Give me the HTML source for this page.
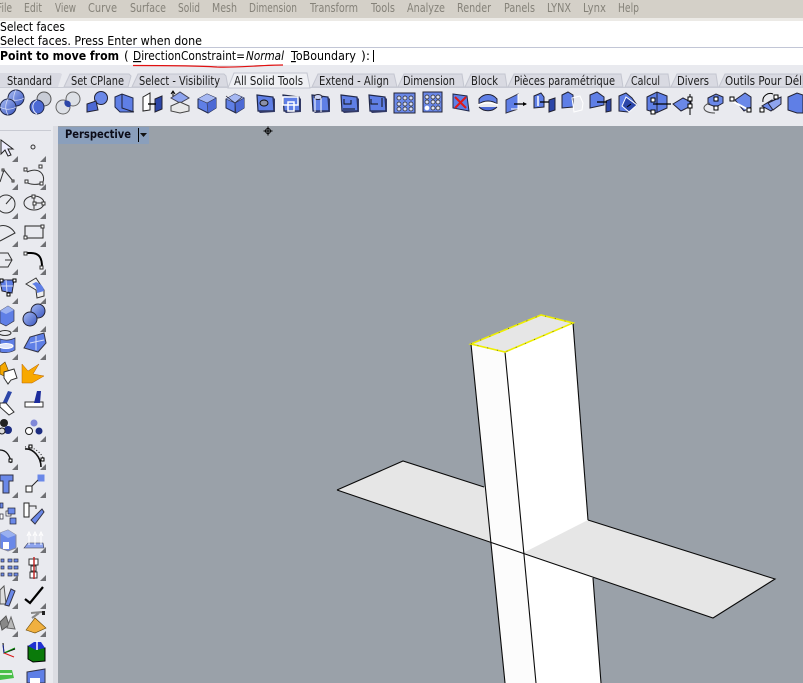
<!DOCTYPE html>
<html><head><meta charset="utf-8"><title>Rhino</title>
<style>
html,body{margin:0;padding:0;background:#e9eaef;overflow:hidden}
svg{display:block}
text{font-family:"DejaVu Sans","Liberation Sans",sans-serif}
.m{font-size:12px;fill:#858279}
.c{font-size:12px;fill:#000}
.t{font-size:12px;fill:#1c1c1c}
</style></head><body>
<svg width="803" height="683" viewBox="0 0 803 683" xmlns="http://www.w3.org/2000/svg">
<defs>
<linearGradient id="bl" x1="0" y1="0" x2="1" y2="1"><stop offset="0" stop-color="#a8bcf4"/><stop offset="1" stop-color="#3a56c0"/></linearGradient>
<symbol id="cube" overflow="visible" viewBox="-12 -12 24 24" width="24" height="24">
<path d="M-9-4 0-9 9-5 9 5 1 10-9 5Z" fill="#5f7fe6" stroke="#20284a" stroke-width="1"/>
<path d="M-9-4 0-9 9-5 0 0Z" fill="#a6b8f2"/><path d="M0 0 9-5 9 5 1 10Z" fill="#4c69d4"/>
<path d="M-9-4 0 0 1 10M0 0 9-5" fill="none" stroke="#334" stroke-width=".6"/>
</symbol>
<symbol id="box" overflow="visible" viewBox="-12 -12 24 24" width="24" height="24">
<path d="M-8-8 8-6 9 8-7 8Z" fill="#5f7fe6" stroke="#20284a" stroke-width="1.2"/>
<path d="M8-6 10-4 10 9 9 8Z" fill="#333a66"/><path d="M-7 8 9 8 10 9-5 10Z" fill="#333a66"/>
</symbol>
<symbol id="sph" overflow="visible" viewBox="-12 -12 24 24" width="24" height="24">
<circle r="8" fill="url(#bl)" stroke="#20284a"/><path d="M-8 0C-3 3 3 3 8 0M0-8C-3-3-3 3 0 8" fill="none" stroke="#dfe5fb" stroke-width=".7"/>
</symbol>
<path id="tri" d="M5 0V6H-1Z" fill="#6f7074"/>
</defs>

<rect width="803" height="683" fill="#e9eaef"/>
<!-- menu -->
<rect width="803" height="18" fill="#d4d0c8"/>
<rect y="18" width="803" height="3" fill="#eceae6"/>
<g class="m">
<text x="-3" y="12" textLength="15" lengthAdjust="spacingAndGlyphs">File</text>
<text x="24" y="12" textLength="18" lengthAdjust="spacingAndGlyphs">Edit</text>
<text x="55" y="12" textLength="21" lengthAdjust="spacingAndGlyphs">View</text>
<text x="88" y="12" textLength="29" lengthAdjust="spacingAndGlyphs">Curve</text>
<text x="130" y="12" textLength="36" lengthAdjust="spacingAndGlyphs">Surface</text>
<text x="178" y="12" textLength="22" lengthAdjust="spacingAndGlyphs">Solid</text>
<text x="212" y="12" textLength="25" lengthAdjust="spacingAndGlyphs">Mesh</text>
<text x="249" y="12" textLength="48" lengthAdjust="spacingAndGlyphs">Dimension</text>
<text x="310" y="12" textLength="48" lengthAdjust="spacingAndGlyphs">Transform</text>
<text x="371" y="12" textLength="24" lengthAdjust="spacingAndGlyphs">Tools</text>
<text x="407" y="12" textLength="38" lengthAdjust="spacingAndGlyphs">Analyze</text>
<text x="457" y="12" textLength="34" lengthAdjust="spacingAndGlyphs">Render</text>
<text x="504" y="12" textLength="31" lengthAdjust="spacingAndGlyphs">Panels</text>
<text x="547" y="12" textLength="24" lengthAdjust="spacingAndGlyphs">LYNX</text>
<text x="583" y="12" textLength="23" lengthAdjust="spacingAndGlyphs">Lynx</text>
<text x="618" y="12" textLength="21" lengthAdjust="spacingAndGlyphs">Help</text>
</g>
<!-- command area -->
<rect y="21" width="803" height="44" fill="#fff"/>
<rect y="47" width="803" height="1" fill="#c2c6d6"/>
<g class="c">
<text x="0" y="31" textLength="65" lengthAdjust="spacingAndGlyphs">Select faces</text>
<text x="0" y="45" textLength="202" lengthAdjust="spacingAndGlyphs">Select faces. Press Enter when done</text>
<text x="0" y="60" textLength="119" lengthAdjust="spacingAndGlyphs" font-weight="bold">Point to move from</text>
<text x="124" y="60">(</text>
<text x="133" y="60" textLength="112" lengthAdjust="spacingAndGlyphs"><tspan text-decoration="underline">D</tspan>irectionConstraint=</text>
<text x="246" y="60" textLength="38" lengthAdjust="spacingAndGlyphs" font-style="italic">Normal</text>
<text x="291" y="60" textLength="65" lengthAdjust="spacingAndGlyphs"><tspan text-decoration="underline">T</tspan>oBoundary</text>
<text x="361" y="60" textLength="9" lengthAdjust="spacingAndGlyphs">):</text>
</g>
<rect x="373" y="50" width="1" height="12" fill="#000"/>
<path d="M133 65.5C160 65.500 195 65.500 217 67C230 67.500 245 66.500 256 66C265 65.500 275 65 283 65" fill="none" stroke="#e01010" stroke-width="1.200"/>

<!-- tab row -->
<path d="M0 73H60L62 74 58 87H0Z" fill="#d9dae2"/>
<g fill="#d9dae2" stroke="#c4c6d0" stroke-width="1">
<path d="M64 87 70 74 129 74 131 76 128 87Z"/>
<path d="M132 87 138 74 224 74 226 76 228 87Z"/>
<path d="M312 87 318 74 394 74 397 87Z"/>
<path d="M398 87 404 74 462 74 464 87Z"/>
<path d="M465 87 471 74 505 74 507 87Z"/>
<path d="M508 87 514 74 621 74 623 87Z"/>
<path d="M625 87 631 74 668 74 670 87Z"/>
<path d="M671 87 677 74 716 74 718 87Z"/>
<path d="M719 87 725 74 803 74 803 87Z"/>
</g>
<path d="M228 88 234 73 307 73 310 88Z" fill="#eff0f4" stroke="#c4c6d0"/>
<rect y="87" width="228" height="1" fill="#c8cad4"/><rect x="310" y="87" width="493" height="1" fill="#c8cad4"/>
<g class="t">
<text x="7" y="85" textLength="45" lengthAdjust="spacingAndGlyphs">Standard</text>
<text x="71" y="85" textLength="53" lengthAdjust="spacingAndGlyphs">Set CPlane</text>
<text x="139" y="85" textLength="81" lengthAdjust="spacingAndGlyphs">Select - Visibility</text>
<text x="234" y="85" textLength="69" lengthAdjust="spacingAndGlyphs">All Solid Tools</text>
<text x="319" y="85" textLength="70" lengthAdjust="spacingAndGlyphs">Extend - Align</text>
<text x="403" y="85" textLength="52" lengthAdjust="spacingAndGlyphs">Dimension</text>
<text x="471" y="85" textLength="27" lengthAdjust="spacingAndGlyphs">Block</text>
<text x="514" y="85" textLength="101" lengthAdjust="spacingAndGlyphs">Pièces paramétrique</text>
<text x="631" y="85" textLength="29" lengthAdjust="spacingAndGlyphs">Calcul</text>
<text x="677" y="85" textLength="32" lengthAdjust="spacingAndGlyphs">Divers</text>
<text x="725" y="85" textLength="84" lengthAdjust="spacingAndGlyphs">Outils Pour Délit</text>
</g>

<!-- toolbar icons -->
<use href="#sph" x="4" y="86"/><use href="#sph" x="-4" y="95"/>
<circle cx="44" cy="99" r="7" fill="#c8ccd6" stroke="#555"/><circle cx="37" cy="107" r="7" fill="#4c69d4" stroke="#20284a"/><path d="M37 100C30 104 33 112 37 114" fill="none" stroke="#e2e6f8"/>
<circle cx="73" cy="99" r="7" fill="#dde0e6" stroke="#666"/><circle cx="63" cy="107" r="7" fill="#dde0e6" stroke="#666"/><path d="M65 100.500C70 100 72 103 70 107 66 108 63 104 65 100.500Z" fill="#2c46a8"/>
<circle cx="101" cy="98" r="6.500" fill="#6a88e8" stroke="#223"/><path d="M87 104 96 101 98 110 87 112Z" fill="#4c69d4" stroke="#223"/>
<path d="M115 97 122 94 133 98 133 112 120 112 115 107Z" fill="#5f7fe6" stroke="#20284a"/><path d="M122 94 122 108 134 112" fill="none" stroke="#223"/>
<path d="M143 97 150 93 150 110 143 111Z" fill="#fff" stroke="#222"/><path d="M155 99 162 96 162 109 155 112Z" fill="#2c46a8" stroke="#223"/><path d="M148 104H156" stroke="#000" stroke-width="1.400"/>
<path d="M173 92V99M171 94 173 91 175 94" stroke="#000" fill="none"/><path d="M171 98 180 92 189 98 180 103Z" fill="#8ea4ee" stroke="#445"/><path d="M171 106 180 102 189 106V111L180 113 171 111Z" fill="#e8e8e8" stroke="#444"/>
<use href="#cube" x="195" y="91"/>
<use href="#cube" x="223" y="91"/><path d="M226 96 235 103 242 97M235 103 235 113" stroke="#223" stroke-width=".7" fill="none"/>
<use href="#box" x="253" y="91"/><ellipse cx="264" cy="103" rx="4" ry="3" fill="#8a90a8" stroke="#111"/>
<use href="#box" x="279" y="91"/><path d="M283 97H298V105H283ZM288 102H294V111H288Z" fill="none" stroke="#fff" stroke-width="1.500"/>
<use href="#box" x="308" y="91"/><ellipse cx="318" cy="97" rx="4" ry="2.500" fill="#cdd6f6" stroke="#223"/><path d="M315 98V112M321 98V112" stroke="#fff"/>
<use href="#box" x="337" y="91"/><path d="M344 99V104H351V100M343 109H355" stroke="#111" fill="none"/>
<use href="#box" x="365" y="91"/><path d="M371 99V104H378M382 98V107" stroke="#111" fill="none"/>
<rect x="394" y="93" width="21" height="20" fill="#6a88e8" stroke="#223"/><g fill="#d6dcf5" stroke="#222" stroke-width=".7"><circle cx="399" cy="98" r="2"/><circle cx="405" cy="98" r="2"/><circle cx="411" cy="98" r="2"/><circle cx="399" cy="104" r="2"/><circle cx="405" cy="104" r="2"/><circle cx="411" cy="104" r="2"/><circle cx="399" cy="109" r="2"/><circle cx="405" cy="109" r="2"/><circle cx="411" cy="109" r="2"/></g>
<rect x="423" y="92" width="19" height="20" fill="#6a88e8" stroke="#223"/><g fill="#dfe3f6" stroke="#222" stroke-width=".7"><circle cx="427" cy="97" r="2"/><circle cx="433" cy="97" r="2"/><circle cx="438" cy="97" r="2"/><circle cx="427" cy="102" r="2"/><circle cx="433" cy="102" r="2"/><circle cx="438" cy="102" r="2"/><circle cx="427" cy="108" r="2" fill="#fff" stroke="#fff"/><circle cx="433" cy="108" r="2"/><circle cx="438" cy="108" r="2"/></g>
<path d="M453 94 467 96 469 111 453 108Z" fill="#5f7fe6" stroke="#20284a"/><path d="M455 97 466 108M466 97 455 108" stroke="#e01818" stroke-width="2"/>
<path d="M479 99C484 93 492 93 497 99V104C492 100 484 100 479 104Z" fill="#5f7fe6" stroke="#223"/><path d="M479 107C484 112 492 112 497 107" fill="#4c69d4" stroke="#223"/><path d="M478 105C485 102 491 102 498 105" fill="none" stroke="#fff" stroke-width="1.500"/>
<path d="M506 100 518 94V109L506 113Z" fill="#5f7fe6" stroke="#334"/><path d="M518 94 518 109 511 109" stroke="#fff" fill="none"/><path d="M514 104H526" stroke="#000" stroke-width="1.300"/><path d="M523 102 527 104 523 106Z"/>
<path d="M534 96 541 93 544 97 544 107 534 108Z" fill="#5f7fe6" stroke="#223"/><path d="M549 100 555 98V110L549 112Z" fill="#2c46a8" stroke="#223"/><path d="M540 102H549" stroke="#000" stroke-width="1.300"/><path d="M538 96V106" stroke="#fff" stroke-width="1.500"/>
<path d="M562 95 568 92 573 95 573 107 562 108Z" fill="#5f7fe6" stroke="#223"/><path d="M572 98 580 96 583 103 582 110 574 112Z" fill="none" stroke="#fff"/>
<path d="M590 95 597 92 604 97 604 105 590 108Z" fill="#5f7fe6" stroke="#223"/><path d="M606 101 611 99 611 111 606 112Z" fill="#2c46a8" stroke="#223"/><path d="M597 102H607" stroke="#000" stroke-width="1.300"/>
<path d="M619 96 626 93 632 98 637 105 628 112 619 111Z" fill="#5f7fe6" stroke="#223"/><path d="M626 97 637 105 629 112 622 106Z" fill="#2c46a8" stroke="#fff"/><path d="M627 107 631 104" stroke="#000"/>
<path d="M647 97 657 92 667 96V108L656 113 647 110Z" fill="#5f7fe6" stroke="#223"/><path d="M657 92V113" stroke="#223"/><path d="M653 104H671" stroke="#000" stroke-width="1.300"/><rect x="651" y="98" width="4" height="4" fill="#fff" stroke="#000"/><rect x="651" y="110" width="4" height="4" fill="#fff" stroke="#000"/>
<path d="M673 104 683 98 691 102 691 106 681 111Z" fill="#6a88e8" stroke="#223"/><path d="M690 94V115" stroke="#000"/><rect x="688" y="97" width="4" height="4" fill="#fff" stroke="#000"/><rect x="688" y="104" width="4" height="4" fill="#fff" stroke="#000"/>
<path d="M708 98 716 94 723 97V103L716 107 708 104Z" fill="#6a88e8" stroke="#223"/><path d="M710 103C700 106 703 113 715 113" fill="none" stroke="#555"/><rect x="714" y="97" width="4" height="4" fill="#fff" stroke="#000"/><rect x="714" y="106" width="4" height="4" fill="#fff" stroke="#000"/>
<path d="M735 100 745 93 751 97V107L744 111Z" fill="#6a88e8" stroke="#223"/><path d="M732 101 749 110" stroke="#fff" stroke-width="2"/><rect x="730" y="97" width="4" height="4" fill="#fff" stroke="#000"/><rect x="747" y="108" width="4" height="4" fill="#fff" stroke="#000"/>
<path d="M762 106 772 100 779 104 771 111Z" fill="#6a88e8" stroke="#223"/><path d="M768 103 781 97V104L773 110Z" fill="#8ea4ee" stroke="#223"/><path d="M763 102C762 96 768 92 773 94" fill="none" stroke="#000"/><rect x="774" y="95" width="4" height="4" fill="#fff" stroke="#000"/><rect x="760" y="108" width="4" height="4" fill="#fff" stroke="#000"/>
<path d="M788 97 797 93 803 95V113L797 113 788 110Z" fill="#5f7fe6" stroke="#223"/>

<rect y="126" width="803" height="4" fill="#e9eaef"/>
<!-- viewport -->
<rect x="58" y="126" width="745" height="557" fill="#9aa1a9"/>
<rect x="53" y="126" width="5" height="557" fill="#dcdde3"/>
<rect x="0" y="130" width="51" height="1" fill="#c9cbd3"/>
<rect x="58" y="127" width="91" height="17" fill="#8a9fbc"/>
<text x="65" y="138" font-size="11.500" font-weight="bold" fill="#0c0c18" textLength="66" lengthAdjust="spacingAndGlyphs">Perspective</text>
<rect x="138" y="128" width="1" height="14" fill="#000"/>
<path d="M140 133H147L143.500 137Z" fill="#111"/>
<g stroke="#000" fill="none"><circle cx="268" cy="131" r="2.500"/><path d="M268 126.500V135.500M263.500 131H272.500"/></g>

<!-- 3D -->
<path d="M337 490 403 461 485 487 491 543Z" fill="#e6e6e6"/>
<path d="M471 344 505 352 536 683H505Z" fill="#fcfcfc"/>
<path d="M505 352 573 323 601 683H536Z" fill="#fff"/>
<path d="M471 344 541 315 573 323 505 352Z" fill="#e6e6e6"/>
<path d="M523 553 588 520 775 579 713 618Z" fill="#e6e6e6"/>
<g fill="none" stroke="#0a0a0a" stroke-width="1.100">
<path d="M337 490 403 461 484 487"/>
<path d="M337 490 713 618 775 579 588 520"/>
<path d="M471 344 505 683"/>
<path d="M505 352 536 683"/>
<path d="M573 323 588 520"/>
<path d="M593 578 601 683"/>
</g>
<path d="M471 344 541 315 573 323 505 352Z" fill="none" stroke="#eeee00" stroke-width="1.600"/>
<path d="M471 344 541 315 573 323 505 352Z" fill="none" stroke="#333" stroke-width=".6" stroke-dasharray="1 9"/>

<!-- left column -->
<g fill="none" stroke="#333">
<path d="M1 140V154L5 150 8 156 11 155 8 149H13Z" fill="#eef" stroke="#222"/>
<circle cx="33" cy="147" r="2"/>
<path d="M0 182 4 170 13 181"/><rect x="2" y="169" width="2" height="2" fill="#fff"/><rect x="12" y="180" width="2" height="2" fill="#fff"/>
<path d="M27 172C43 165 46 180 42 183 38 185 30 185 26 182"/><g fill="#fff"><rect x="24" y="168" width="3" height="3"/><rect x="39" y="165" width="3" height="3"/><rect x="40" y="182" width="3" height="3"/><rect x="25" y="180" width="3" height="3"/></g>
<circle cx="6" cy="204" r="9"/><path d="M6 204 12 197"/>
<ellipse cx="34" cy="203" rx="10" ry="7"/><path d="M34 197V209M34 203H43"/><g fill="#fff"><rect x="32" y="195" width="3" height="3"/><rect x="33" y="202" width="3" height="3"/><rect x="42" y="202" width="3" height="3"/></g>
<path d="M0 226C6 224 12 228 15 233L0 241"/>
<rect x="25" y="226" width="18" height="12" stroke="#222"/><g fill="#fff"><rect x="24" y="236" width="3" height="3"/><rect x="41" y="225" width="3" height="3"/></g>
<path d="M0 253H8L12 260 8 267H0" /><path d="M5 260H12"/>
<path d="M26 253H31C40 253 42 259 42 267" stroke="#000" stroke-width="2"/><g fill="#fff"><rect x="24" y="252" width="3" height="3"/><rect x="40" y="266" width="3" height="3"/></g>
</g>
<path d="M0 280 14 280 12 293 2 291Z" fill="#5f7fe6" stroke="#223"/><path d="M6 280 7 292M1 286 13 286" stroke="#d6dcf5"/>
<rect x="0" y="279" width="3" height="3" fill="#fff" stroke="#000"/><rect x="13" y="279" width="3" height="3" fill="#fff" stroke="#000"/><rect x="7" y="293" width="3" height="3" fill="#fff" stroke="#000"/>
<path d="M26 284 36 278 44 290 44 296 37 298 36 290Z" fill="#eee" stroke="#333"/><path d="M36 282C42 284 44 288 44 291L37 293C37 288 35 285 32 284Z" fill="#5f7fe6"/>
<path d="M0 311 8 306 14 310V321L6 326 0 323Z" fill="#5f7fe6" stroke="#334" stroke-width=".7"/><path d="M0 311 6 314 14 310 8 306Z" fill="#9ab0f0"/>
<circle cx="38" cy="311" r="7" fill="url(#bl)" stroke="#223"/><circle cx="30" cy="319" r="7" fill="url(#bl)" stroke="#223"/>
<ellipse cx="5" cy="333" rx="6" ry="2.500" fill="none" stroke="#333"/><path d="M0 339C6 341 11 340 15 338V350C10 353 4 353 0 352Z" fill="#5f7fe6" stroke="#334" stroke-width=".7"/><ellipse cx="6" cy="346" rx="7" ry="2.500" fill="#dfe5fb" stroke="#fff"/>
<path d="M24 348 30 337 44 333 46 343 38 352Z" fill="#5f7fe6" stroke="#334"/><path d="M30 343 44 340M36 336 36 350" stroke="#d6dcf5"/>
<path d="M0 366 5 362 9 372 4 376 0 374Z" fill="#f6a800" stroke="#664400" stroke-width=".6"/><path d="M4 372 14 369 17 378 11 380 8 384 4 378Z" fill="#fff" stroke="#333"/>
<path d="M22 383V364L28 371 39 364 33 374 44 376 32 383Z" fill="#f8a800" stroke="#b86000" stroke-width=".5"/>
<path d="M1 403H7L12 392 8 391 3 402Z" fill="#2c46a8"/><path d="M0 403H6L14 412 9 415 0 407Z" fill="#fff" stroke="#333"/>
<rect x="25" y="402" width="18" height="5" fill="#fff" stroke="#333"/><path d="M34 403 37 391H41L40 403Z" fill="#1c2c9c"/>
<circle cx="4" cy="423" r="4" fill="#222"/><circle cx="8" cy="430" r="4" fill="#1c2c80"/><circle cx="2" cy="431" r="3" fill="#ddd" stroke="#222"/>
<circle cx="34" cy="423" r="3.500" fill="#8088d8"/><circle cx="29" cy="431" r="3.500" fill="#fff" stroke="#222"/><circle cx="39" cy="431" r="3.500" fill="#1c2c80"/>
<path d="M0 450C6 450 10 455 11 463" fill="none" stroke="#111" stroke-width="1.300"/><rect x="9" y="459" width="3" height="3" fill="#fff" stroke="#000"/>
<path d="M25 449C33 448 41 457 41 467" fill="none" stroke="#111" stroke-width="1.600"/><path d="M25 447C34 446 43 454 44 461" fill="none" stroke="#111" stroke-dasharray="1 2"/><rect x="29" y="445" width="3" height="3" fill="#fff" stroke="#000"/><rect x="41" y="458" width="3" height="3" fill="#fff" stroke="#000"/>
<path d="M0 475H13V481H9V493H3V481H0Z" fill="#6a88e8" stroke="#334"/>
<rect x="26" y="486" width="6" height="6" fill="#fff" stroke="#222"/><rect x="38" y="475" width="6" height="6" fill="#6a88e8" stroke="#6a88e8"/><path d="M32 486 38 480" stroke="#222"/>
<g stroke="#223" stroke-width=".7"><rect x="0" y="503" width="3" height="5" fill="#6a88e8"/><rect x="6" y="511" width="5" height="5" fill="#fff"/><rect x="8" y="508" width="7" height="6" fill="#6a88e8"/><rect x="0" y="514" width="3" height="5" fill="#fff"/><rect x="10" y="518" width="6" height="6" fill="#6a88e8"/></g>
<rect x="24" y="503" width="5" height="14" fill="#fff" stroke="#222"/><path d="M31 520 42 509 44 512 35 524Z" fill="#6a88e8" stroke="#334"/><path d="M29 506H36V509" fill="none" stroke="#333"/>
<path d="M0 533 8 530 16 535V548L8 551 0 548Z" fill="#6a88e8" stroke="#889"/><path d="M0 533 8 530 16 535 8 538Z" fill="#9ab0f0"/><rect x="3" y="542" width="6" height="7" fill="#fff"/>
<path d="M24 548 28 543H43L44 548Z" fill="#8ea4ee" stroke="#334" stroke-width=".6"/><path d="M29 545V534M35 545V534M41 545V534M27 536 29 532 31 536M33 536 35 532 37 536M39 536 41 532 43 536" stroke="#fff" fill="none"/>
<g fill="#6a88e8" stroke="#334" stroke-width=".7"><rect x="1" y="559" width="3" height="3"/><rect x="8" y="559" width="4" height="3"/><rect x="14" y="559" width="4" height="3"/><rect x="1" y="566" width="3" height="3"/><rect x="8" y="566" width="4" height="3"/><rect x="14" y="566" width="4" height="3"/><rect x="1" y="573" width="3" height="3"/><rect x="8" y="573" width="4" height="3"/><rect x="14" y="573" width="4" height="3"/></g>
<rect x="29" y="559" width="9" height="6" fill="#fff" stroke="#333"/><rect x="31" y="566" width="5" height="5" fill="#fff" stroke="#333"/><rect x="30" y="572" width="7" height="6" fill="#fff" stroke="#333"/><path d="M34 557V579" stroke="#c02828" stroke-width="1.500"/>
<path d="M0 590 4 586 6 604 0 604Z" fill="#ddd" stroke="#555"/><path d="M5 605 11 589 15 591 9 606Z" fill="#6a88e8" stroke="#334"/>
<path d="M25 599 30 603 43 587" fill="none" stroke="#000" stroke-width="2.200"/>
<path d="M0 622 6 616 9 625 2 630Z" fill="#888" stroke="#555"/><path d="M7 628 11 617 15 629Z" fill="#b8b8b8" stroke="#666"/>
<path d="M26 630 35 618 46 628 35 633Z" fill="#f0b040" stroke="#664400" stroke-width=".6"/><path d="M31 613 42 612M32 618 39 613" stroke="#888" stroke-width="2"/><rect x="42" y="611" width="3" height="4" fill="#222"/>
<path d="M3 643 4 653 15 649" fill="none" stroke="#000"/><path d="M4 653 15 648" stroke="#0a8a0a" fill="none"/><path d="M4 653 14 657" stroke="#d81818"/><path d="M3 645 4 653" stroke="#1c2c9c"/>
<path d="M28 646 45 648 45 661 33 662 28 659Z" fill="#0a7a0a" stroke="#000"/><path d="M28 646 34 642 41 642 45 648 36 650Z" fill="#2030d0"/><path d="M37 641V650" stroke="#fff" stroke-width="1.500"/>
<path d="M0 670H12L14 678 0 680Z" fill="#48c048"/><rect x="0" y="673" width="12" height="2" fill="#d8f0d8"/>
<path d="M27 672 45 669V683H27Z" fill="#5f7fe6" stroke="#334"/><path d="M30 678H40V683H30Z" fill="#fff"/>
<g>
<use href="#tri" x="13" y="156"/><use href="#tri" x="41" y="156"/>
<use href="#tri" x="13" y="184"/><use href="#tri" x="41" y="184"/>
<use href="#tri" x="13" y="213"/><use href="#tri" x="41" y="213"/>
<use href="#tri" x="13" y="241"/><use href="#tri" x="41" y="241"/>
<use href="#tri" x="13" y="269"/><use href="#tri" x="41" y="269"/>
<use href="#tri" x="13" y="298"/><use href="#tri" x="41" y="298"/>
<use href="#tri" x="13" y="326"/><use href="#tri" x="41" y="326"/>
<use href="#tri" x="13" y="354"/><use href="#tri" x="41" y="354"/>
<use href="#tri" x="13" y="436"/><use href="#tri" x="41" y="436"/>
<use href="#tri" x="13" y="464"/><use href="#tri" x="41" y="464"/>
<use href="#tri" x="13" y="492"/><use href="#tri" x="41" y="492"/>
<use href="#tri" x="13" y="547"/><use href="#tri" x="41" y="547"/>
<use href="#tri" x="13" y="575"/><use href="#tri" x="41" y="575"/>
<use href="#tri" x="13" y="603"/><use href="#tri" x="41" y="603"/>
<use href="#tri" x="13" y="631"/><use href="#tri" x="41" y="631"/>
</g>
</svg>
</body></html>
